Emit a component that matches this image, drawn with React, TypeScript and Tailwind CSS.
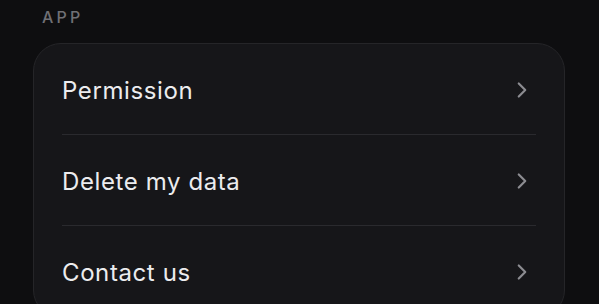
import React from 'react';
import { ChevronRight } from 'lucide-react';

const items = ['Permission', 'Delete my data', 'Contact us'];

function App() {
  return (
    <div
      className="min-h-screen w-full bg-[#0e0e10] pl-[33px] pr-[34px] pt-[6px]"
      style={{ fontFamily: 'Inter, "Noto Sans", sans-serif' }}
    >
      <div className="ml-[9px] text-[16px] leading-[22px] font-medium tracking-[0.2em] text-[#707075]">
        APP
      </div>
      <div className="mt-[15px] rounded-[28px] border border-[#252528] bg-[#161619] px-[28px]">
        {items.map((label, i) => (
          <div
            key={label}
            className={
              'flex h-[91px] items-center justify-between pt-[3px] ' +
              (i < items.length - 1 ? 'border-b border-[#2a2a2e]' : '')
            }
          >
            <span className="text-[24px] tracking-[0.025em] text-[#ececee]">{label}</span>
            <ChevronRight size={26} strokeWidth={2} className="mr-[1px] -mt-[2px] text-[#8c8c91]" />
          </div>
        ))}
      </div>
    </div>
  );
}

export default App;
